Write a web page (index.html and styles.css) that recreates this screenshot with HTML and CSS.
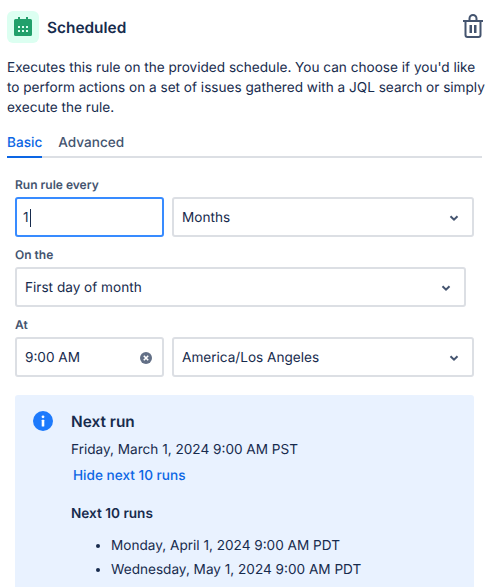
FILE: index.html
```html
<!DOCTYPE html>
<html lang="en">
  <head>
    <meta charset="UTF-8"/>
    <title>Scheduled</title>
    <link rel="stylesheet" href="styles.css">
  </head>
  <body>
    <header class="ruleHeader">
      <div class="ruleHeader_icon">
        <svg width="20" height="20" viewBox="0 0 20 20">
          <path fill="#22a06b" d="M5 0h2v2h6V0h2v2h2.500A1.500 1.500 0 0 1 19 3.500v14a1.500 1.500 0 0 1-1.500 1.500h-15A1.500 1.500 0 0 1 1 17.500v-14A1.500 1.500 0 0 1 2.500 2H5z"/>
          <path fill="#dcfff1" d="M5 9h2v2H5zM9 9h2v2H9zM13 9h2v2h-2zM5 13h2v2H5zM9 13h2v2H9zM13 13h2v2h-2z"/>
        </svg>
      </div>
      <h1 class="ruleHeader_title">Scheduled</h1>
      <svg class="ruleHeader_trash" width="22" height="24" viewBox="0 0 22 24">
        <path fill="none" stroke="#44546f" stroke-width="2" d="M1 7h20M3.500 7V21a2 2 0 0 0 2 2h11a2 2 0 0 0 2-2V7M7.500 7V4.500a3.500 3.500 0 0 1 7 0V7"/>
        <path fill="#44546f" d="M7.500 11h2.500v8H7.500zM12 11h2.500v8H12z"/>
      </svg>
    </header>

    <p class="description">Executes this rule on the provided schedule. You can choose if you'd like to perform actions on a set of issues gathered with a JQL search or simply execute the rule.</p>

    <nav class="tabs">
      <span class="tabs_item tabs_item_active">Basic</span>
      <span class="tabs_item">Advanced</span>
    </nav>

    <form class="ruleForm">
      <label class="fieldLabel">Run rule every</label>
      <div class="fieldRow">
        <div class="field field_small field_focus"><span>1</span><span class="caret"></span></div>
        <div class="field field_wide">
          <span>Months</span>
          <svg class="chevron" width="10" height="7" viewBox="0 0 10 7"><path fill="none" stroke="#44546f" stroke-width="2" d="M1.500 1.200l3.500 3.500 3.500-3.500"/></svg>
        </div>
      </div>

      <label class="fieldLabel">On the</label>
      <div class="fieldRow fieldRow_single">
        <div class="field field_wide">
          <span>First day of month</span>
          <svg class="chevron" width="10" height="7" viewBox="0 0 10 7"><path fill="none" stroke="#44546f" stroke-width="2" d="M1.500 1.200l3.500 3.500 3.500-3.500"/></svg>
        </div>
      </div>

      <label class="fieldLabel">At</label>
      <div class="fieldRow">
        <div class="field field_small">
          <span>9:00 AM</span>
          <svg class="clearIcon" width="12" height="12" viewBox="0 0 12 12">
            <circle cx="6" cy="6" r="6" fill="#626f86"/>
            <path fill="none" stroke="#fff" stroke-width="1.600" d="M3.800 3.800l4.400 4.400M8.200 3.800l-4.400 4.400"/>
          </svg>
        </div>
        <div class="field field_wide">
          <span>America/Los Angeles</span>
          <svg class="chevron" width="10" height="7" viewBox="0 0 10 7"><path fill="none" stroke="#44546f" stroke-width="2" d="M1.500 1.200l3.500 3.500 3.500-3.500"/></svg>
        </div>
      </div>
    </form>

    <section class="nextRun">
      <svg class="nextRun_icon" width="20" height="20" viewBox="0 0 20 20">
        <circle cx="10" cy="10" r="10" fill="#1d7afc"/>
        <circle cx="10" cy="5.800" r="1.400" fill="#fff"/>
        <rect x="8.700" y="8.700" width="2.600" height="6.800" rx="0.600" fill="#fff"/>
      </svg>
      <div class="nextRun_body">
        <h2 class="nextRun_title">Next run</h2>
        <p class="nextRun_date">Friday, March 1, 2024 9:00 AM PST</p>
        <a class="nextRun_link">Hide next 10 runs</a>
        <h3 class="nextRun_subtitle">Next 10 runs</h3>
        <ul class="nextRun_list">
          <li>Monday, April 1, 2024 9:00 AM PDT</li>
          <li>Wednesday, May 1, 2024 9:00 AM PDT</li>
        </ul>
      </div>
    </section>
  </body>
</html>
```

FILE: styles.css
```css
html, body {
  margin: 0;
  height: 587px;
  overflow: hidden;
  background-color: #fff;
}
body {
  padding: 11px 0 0 7px;
  box-sizing: border-box;
  font-family: Inter, "Noto Sans", sans-serif;
  font-size: 13.6px;
  line-height: 20px;
  color: #172b4d;
  text-rendering: geometricPrecision;
}

.ruleHeader {
  display: flex;
  align-items: center;
  height: 32px;
  width: 477px;
}
.ruleHeader_icon {
  width: 32px;
  height: 32px;
  border-radius: 6px;
  background-color: #dcfff1;
  display: flex;
  justify-content: center;
  align-items: center;
}
.ruleHeader_title {
  margin: 1px 0 0 8px;
  font-size: 15.4px;
  font-weight: 600;
  flex: 1;
}
.ruleHeader_trash {
  margin-top: -2px;
}

.description {
  margin: 15px 0 0 0;
  width: 484px;
  color: #172b4d;
}

.tabs {
  display: flex;
  gap: 16px;
  width: 475px;
  margin-top: 14px;
  height: 24px;
  border-bottom: 2px solid #dcdfe4;
}
.tabs_item {
  height: 26px;
  padding-top: 1px;
  box-sizing: border-box;
  font-weight: 500;
  color: #44546f;
}
.tabs_item_active {
  color: #0c66e4;
  border-bottom: 2px solid #0c66e4;
}

.ruleForm {
  margin: 19px 0 0 8px;
}
.fieldLabel {
  display: block;
  font-size: 12px;
  font-weight: 600;
  line-height: 16px;
  color: #44546f;
  margin-bottom: 4px;
}
.fieldRow {
  display: flex;
  gap: 8px;
  width: 459px;
  margin-bottom: 10px;
}
.fieldRow_single {
  width: 451px;
}
.field {
  height: 40px;
  box-sizing: border-box;
  border: 2px solid #dcdfe4;
  border-radius: 3px;
  padding: 2px 8px 0 8px;
  display: flex;
  align-items: center;
  background-color: #fff;
}
.field_small {
  width: 149px;
  flex: none;
}
.field_wide {
  flex: 1;
}
.field_focus {
  border-color: #388bff;
  padding-left: 6px;
}
.caret {
  width: 1px;
  height: 18px;
  margin-left: 1px;
  background-color: #172b4d;
}
.chevron {
  margin-left: auto;
  margin-right: 5px;
}
.clearIcon {
  margin-left: auto;
  margin-right: 2px;
}

.nextRun {
  display: flex;
  width: 459px;
  height: 192px;
  margin: 18px 0 0 8px;
  padding: 16px 0 0 18px;
  box-sizing: border-box;
  background-color: #e9f2ff;
  border-radius: 3px 3px 0 0;
}
.nextRun_icon {
  flex: none;
}
.nextRun_body {
  margin: 1px 0 0 18px;
}
.nextRun_title {
  margin: 0;
  font-size: 15.4px;
  font-weight: 600;
  line-height: 20px;
}
.nextRun_date {
  margin: 8px 0 0 0;
}
.nextRun_link {
  display: block;
  margin: 6px 0 0 2px;
  font-weight: 500;
  color: #0c66e4;
}
.nextRun_subtitle {
  margin: 18px 0 0 0;
  font-size: 13.6px;
  font-weight: 600;
  line-height: 20px;
}
.nextRun_list {
  margin: 12px 0 0 0;
  padding-left: 40px;
}
.nextRun_list li {
  margin-bottom: 4px;
}
```
